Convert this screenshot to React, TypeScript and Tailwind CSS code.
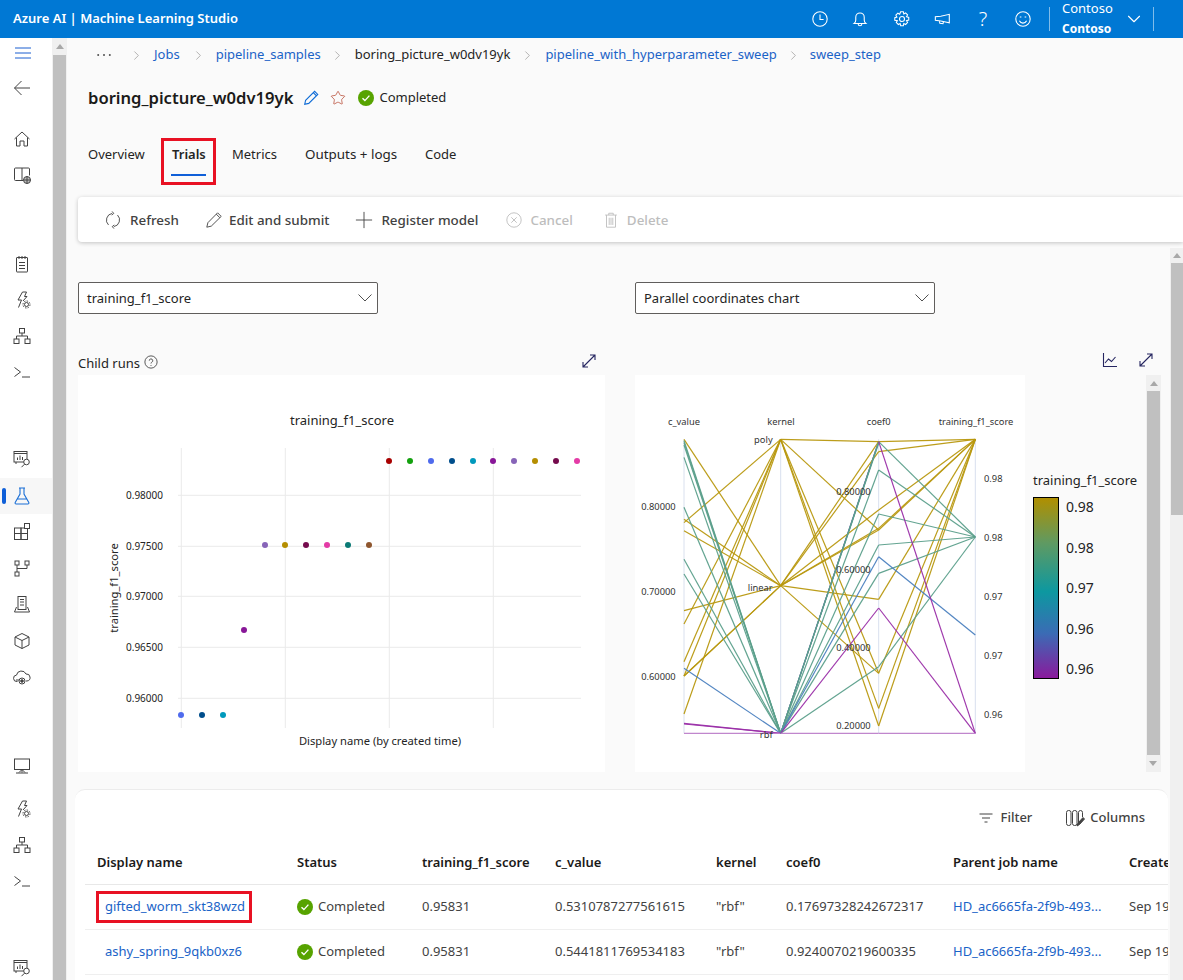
import React from "react";
import { ChevronRight, ChevronDown, Star } from "lucide-react";

type SvgP = { className?: string; children?: React.ReactNode };
const I = ({ className = "w-5 h-5 text-[#424242]", children }: SvgP) => (
  <svg viewBox="0 0 20 20" fill="none" stroke="currentColor" strokeWidth={1} className={className}>{children}</svg>
);

const side = {
  menu: <><path d="M1 5h16M1 10h16M1 15h16" /></>,
  back: <><path d="M18 10H2.500M9.500 3l-7 7 7 7" /></>,
  home: <><path d="M2.500 10 10 3l7.500 7" /><path d="M4.500 8.500V17H8v-5h4v5h3.500V8.500" /></>,
  book: <><path d="M11 15.500H3.500a1 1 0 0 1-1-1V4a1 1 0 0 1 1-1h13a1 1 0 0 1 1 1v6.500" /><path d="M10 3v12.500" /><circle cx="15" cy="15" r="3.500" fill="currentColor" fillOpacity={0.35} /><path d="M11.500 15h7M15 11.500v7" /></>,
  note: <><rect x="4.500" y="3.500" width="11" height="14.500" rx="0.5" /><path d="M7 2v3M10 2v3M13 2v3M7 8.500h6M7 11.500h6M7 14.500h6" /></>,
  auto: <><path d="M10.500 2 6 10h3.500l-3 7.500" /><path d="M10.500 2h4l-2 4.500h2.500L11 11" /><circle cx="14.500" cy="14.500" r="2" /><circle cx="14.500" cy="14.500" r="3.500" strokeDasharray="1.500 1.200" /></>,
  net: <><rect x="7.500" y="2.500" width="5" height="4.500" /><rect x="2" y="13" width="5" height="4.500" /><rect x="13" y="13" width="5" height="4.500" /><path d="M10 7v3M4.500 13v-3h11v3" /></>,
  term: <><path d="m2.500 5.500 6 4.500-6 4.500M10 15h8" /></>,
  data: <><path d="M4 15V5h11" /><rect x="2" y="2.500" width="13" height="10.500" fill="#fff" /><path d="M2 4.500h13M5.500 11V8.500M8 11V6.500M10.500 11V8" /><circle cx="14.500" cy="13" r="2.800" fill="#fff" /><path d="m12.500 15.200-3 3" /></>,
  comp: <><rect x="2.500" y="6" width="6.500" height="5.500" /><rect x="9" y="6" width="6.500" height="5.500" /><rect x="2.500" y="11.500" width="6.500" height="6" /><rect x="9" y="11.500" width="6.500" height="6" /><rect x="12.500" y="1.500" width="5" height="5" fill="#fff" /></>,
  pipe: <><rect x="3" y="3" width="4" height="4" /><rect x="13" y="3" width="4" height="4" /><rect x="3" y="14" width="4" height="4" /><path d="M5 7v7M5 10.500h10V7" /></>,
  env: <><rect x="6" y="2.500" width="8" height="13" /><path d="M8 5.500h4M8 8h4M8 11h4M2.500 18l2-5M17.500 18l-2-5M2.500 18h15" /></>,
  box: <><path d="m10 2.500 7 3.500v8l-7 3.500L3 14V6z" /><path d="m3 6 7 3.500L17 6M10 9.500v8" /></>,
  cloud: <><path d="M5.500 14.500H5a3.200 3.200 0 0 1-.5-6.400A5 5 0 0 1 14 7a3.500 3.500 0 0 1 1 7h-1" /><circle cx="10" cy="14" r="3" /><circle cx="10" cy="14" r="1.300" fill="currentColor" /><path d="M4 13h3" /></>,
  mon: <><rect x="2.500" y="3" width="15" height="10.500" /><path d="M10 13.500v3M4 17h12M7 16.500l3-3 3 3" /></>,
};

const Side = ({ k }: { k: keyof typeof side }) => (
  <div className="h-[36px] flex items-center justify-center text-[#424242]">
    <I className="w-[20px] h-[20px] ml-[-8px]">{side[k]}</I>
  </div>
);

const Flask = () => (
  <svg viewBox="0 0 20 20" fill="none" stroke="currentColor" strokeWidth={1.100} className="w-[20px] h-[20px] ml-[-8px]">
    <path d="M7 2h6M8 2v6L3.200 16.500a1 1 0 0 0 .9 1.500h11.800a1 1 0 0 0 .9-1.500L12 8V2M5.500 13h9" />
  </svg>
);

const Sidebar = () => (
  <div className="w-[52px] bg-white shrink-0 flex flex-col">
    <div className="h-[30px] flex items-center justify-center text-[#1a5fd0]"><I className="w-[20px] h-[20px] ml-[-4px]">{side.menu}</I></div>
    <div className="mt-[2px]"><Side k="back" /></div>
    <div className="mt-[15px]"><Side k="home" /></div>
    <Side k="book" />
    <div className="mt-[53px]"><Side k="note" /></div>
    <Side k="auto" />
    <Side k="net" />
    <Side k="term" />
    <div className="mt-[51px]"><Side k="data" /></div>
    <div className="mt-px relative h-[36px] flex items-center justify-center bg-[#f7f7f7] text-[#1a6fd6]">
      <span className="absolute left-[2px] top-[10px] w-[4px] h-[16px] rounded bg-[#0f5fd8]" />
      <Flask />
    </div>
    <Side k="comp" />
    <Side k="pipe" />
    <Side k="env" />
    <div className="mt-px"><Side k="box" /></div>
    <Side k="cloud" />
    <div className="mt-[53px]"><Side k="mon" /></div>
    <div className="mt-[7px]"><Side k="auto" /></div>
    <Side k="net" />
    <Side k="term" />
    <div className="mt-[51px] h-[30px]"><Side k="data" /></div>
  </div>
);

const ArrowUp = () => (
  <svg viewBox="0 0 10 6" className="w-[8px] h-[5px] text-[#a8a8a8]" fill="currentColor"><path d="M5 0l5 6H0z" /></svg>
);

const LeftScroll = () => (
  <div className="w-[15px] shrink-0 bg-[#f0f0f0] flex flex-col pl-px pr-px">
    <div className="h-[17px] flex items-center justify-center"><ArrowUp /></div>
    <div className="flex-1 bg-[#c0c0c0]" />
  </div>
);

const Header = () => (
  <div className="h-[38px] shrink-0 bg-[#0078d4] text-white flex items-center pl-[13px]">
    <div className="font-semibold text-[13px]">Azure AI | Machine Learning Studio</div>
    <div className="ml-auto flex items-center">
      <svg viewBox="0 0 20 20" fill="none" stroke="currentColor" className="w-[18px] h-[18px]"><circle cx="10" cy="10" r="8" strokeWidth={1.200} /><path d="M10 5v5.500h4" strokeWidth={1.200} /></svg>
      <svg viewBox="0 0 20 20" fill="none" stroke="currentColor" strokeWidth={1.200} className="w-[18px] h-[18px] ml-[22px]"><path d="M3.500 15h13c-1.300-1-1.800-2.500-1.800-4V8A4.700 4.700 0 0 0 5.300 8v3c0 1.500-.5 3-1.800 4ZM8 15.500a2 2 0 0 0 4 0" /></svg>
      <svg viewBox="0 0 20 20" fill="none" stroke="currentColor" strokeWidth={1.200} className="w-[18px] h-[18px] ml-[24px]"><circle cx="10" cy="10" r="2.800" /><path d="m8.500 2 3 0 .5 2.300 2-1 2.200 2.200-1.200 2 2.500.7v3l-2.500.6 1.200 2.100-2.200 2.200-2-1.100-.5 2.500h-3l-.6-2.500-2 1.100-2.200-2.200 1.100-2.100L2 11.500v-3l2.300-.6-1.100-2.100 2.200-2.200 2 1.100z" /></svg>
      <svg viewBox="0 0 20 20" fill="none" stroke="currentColor" strokeWidth={1.200} className="w-[18px] h-[18px] ml-[23px]"><path d="M1.500 7.500v4l6 .8 9.500 2V4.800L7.500 7zM6 12.300l.5 2.500 3.500.5.500-2" /></svg>
      <div className="w-[18px] ml-[22px] text-center text-[20px] leading-[20px] font-light">?</div>
      <svg viewBox="0 0 20 20" fill="none" stroke="currentColor" strokeWidth={1.200} className="w-[18px] h-[18px] ml-[22px]"><circle cx="10" cy="10" r="8" /><path d="M6 12c1 2 2.500 2.600 4 2.600s3-.6 4-2.600" /><path d="M7.300 7.300v1M12.700 7.300v1" strokeWidth={1.800} /></svg>
      <div className="w-px h-[24px] bg-white/50 ml-[17px]" />
      <div className="ml-[12px] w-[63px] h-[38px] flex flex-col overflow-hidden">
        <div className="text-[13px] leading-[18px] mt-[-1px]">Contoso</div>
        <div className="text-[12px] leading-[16px] font-bold mt-[4px]">Contoso</div>
      </div>
      <ChevronDown strokeWidth={1.200} className="w-[22px] h-[22px] ml-[-2px]" />
      <div className="w-px h-[24px] bg-white/50 ml-[8px] mr-[29px]" />
    </div>
  </div>
);

const Sep = () => <ChevronRight strokeWidth={1} className="w-[15px] h-[15px] text-[#8a8886]" />;
const LINK = "text-[#1a63c7]";

const Crumbs = () => (
  <div className="h-[34px] flex items-center text-[13px] pl-[30px] whitespace-nowrap">
    <svg viewBox="0 0 14 4" className="w-[14px] h-[4px]" fill="#505050"><circle cx="1.200" cy="2" r="1" /><circle cx="7" cy="2" r="1" /><circle cx="12.800" cy="2" r="1" /></svg>
    <span className="ml-[18px]"><Sep /></span>
    <span className={`ml-[10px] ${LINK}`}>Jobs</span>
    <span className="ml-[11px]"><Sep /></span>
    <span className={`ml-[10px] ${LINK}`}>pipeline_samples</span>
    <span className="ml-[9px]"><Sep /></span>
    <span className="ml-[10px] text-[#242424]">boring_picture_w0dv19yk</span>
    <span className="ml-[10px]"><Sep /></span>
    <span className={`ml-[10px] ${LINK}`}>pipeline_with_hyperparameter_sweep</span>
    <span className="ml-[9px]"><Sep /></span>
    <span className={`ml-[9px] ${LINK}`}>sweep_step</span>
  </div>
);

const Check = () => (
  <svg viewBox="0 0 16 16" className="w-[16px] h-[16px] shrink-0"><circle cx="8" cy="8" r="8" fill="#57a300" /><path d="m4.500 8.200 2.400 2.400 4.500-5" fill="none" stroke="#fff" strokeWidth={1.400} /></svg>
);

const Title = () => (
  <div className="h-[52px] flex items-center pl-[21px]">
    <div className="text-[16.6px] font-semibold text-[#1b1a19] whitespace-nowrap">boring_picture_w0dv19yk</div>
    <svg viewBox="0 0 20 20" fill="none" stroke="#0f6cd6" strokeWidth={1.200} className="w-[18px] h-[18px] ml-[9px]"><path d="m3 17 1-4.500L14 2.500l3.500 3.500-10 10zM12.500 4l3.500 3.500" /></svg>
    <Star strokeWidth={1.100} className="w-[16px] h-[16px] ml-[10px] text-[#b5452f]" />
    <div className="ml-[12px]"><Check /></div>
    <div className="ml-[5px] text-[13px] text-[#242424]">Completed</div>
  </div>
);

const Tabs = () => (
  <div className="h-[73px] flex pl-[21px] text-[13px] leading-[20px] text-[#242424] whitespace-nowrap">
    <div className="w-[84px] pt-[20px]">Overview</div>
    <div className="relative w-[60px] pt-[20px] font-semibold">
      Trials
      <span className="absolute left-[-1px] top-[50px] w-[35px] h-[2px] bg-[#0f5fd8]" />
      <span className="absolute left-[-11px] top-[14px] w-[55px] h-[47px] border-[3px] border-[#e81123]" />
    </div>
    <div className="w-[73px] pt-[20px]">Metrics</div>
    <div className="w-[120px] pt-[20px] text-[13.4px]">Outputs + logs</div>
    <div className="pt-[20px]">Code</div>
  </div>
);

const Toolbar = () => (
  <div className="ml-[11px] h-[45px] bg-white rounded-l-[4px] shadow-[0_1px_4px_rgba(0,0,0,0.22)] flex items-center text-[13.4px] font-medium text-[#424242] whitespace-nowrap pl-[26px]">
    <svg viewBox="0 0 20 20" fill="none" stroke="currentColor" className="w-[18px] h-[18px]"><path d="M5 15.500A7.500 7.500 0 0 1 9 2.700M15 4.500a7.500 7.500 0 0 1-4 12.800M9 .5l1.800 2.200L8.600 4.500M11 19.500l-1.800-2.200 2.200-1.800" /></svg>
    <span className="ml-[8px] pt-[2px]">Refresh</span>
    <svg viewBox="0 0 20 20" fill="none" stroke="currentColor" className="w-[18px] h-[18px] ml-[26px]"><path d="m2 18 1.200-5L14 2l4 4L7 16.800zM12.500 3.500l4 4" /></svg>
    <span className="ml-[6px] pt-[2px]">Edit and submit</span>
    <svg viewBox="0 0 20 20" fill="none" stroke="currentColor" className="w-[18px] h-[18px] ml-[26px]"><path d="M1 10h18M10 1v18" /></svg>
    <span className="ml-[8px] pt-[2px]">Register model</span>
    <svg viewBox="0 0 20 20" fill="none" stroke="#bdbdbd" className="w-[18px] h-[18px] ml-[27px]"><circle cx="10" cy="10" r="8" /><path d="m7 7 6 6M13 7l-6 6" /></svg>
    <span className="ml-[7px] pt-[2px] text-[#bdbdbd]">Cancel</span>
    <svg viewBox="0 0 20 20" fill="none" stroke="#bdbdbd" className="w-[18px] h-[18px] ml-[29px]"><path d="M3.500 4.500h13M7.500 4.500V2.500h5v2M5 4.500V18h10V4.500M8 7.500v8M10 7.500v8M12 7.500v8" /></svg>
    <span className="ml-[7px] pt-[2px] text-[#bdbdbd]">Delete</span>
  </div>
);

const Select = ({ label }: { label: string }) => (
  <div className="w-[300px] h-[32px] border border-[#605e5c] rounded-[2px] bg-white flex items-center pl-[8px] pr-[5px] text-[13px] text-[#242424]">
    <span className="flex-1 pt-[2px]">{label}</span>
    <svg viewBox="0 0 14 8" fill="none" stroke="#505050" className="w-[14px] h-[8px]"><path d="M.5.500 7 7 13.500.5" /></svg>
  </div>
);

const Expand = () => (
  <svg viewBox="0 0 16 16" fill="none" stroke="#252560" strokeWidth={1.100} className="w-[16px] h-[16px]"><path d="M2 14 14 2M9 2h5v5M2 9v5h5" /></svg>
);

const dots: [number, number, string][] = [
  [243, 945, "#4f6bed"], [306, 945, "#004e8c"], [369, 945, "#0099bc"], [432, 690, "#881798"],
  [495, 435, "#8764b8"], [555, 435, "#b58e00"], [618, 435, "#750b4d"], [681, 435, "#e43ba6"],
  [744, 435, "#0b7a75"], [807, 435, "#8e562e"], [867, 183, "#a80000"], [930, 183, "#13a10e"],
  [993, 183, "#4f6bed"], [1056, 183, "#004e8c"], [1119, 183, "#0099bc"], [1179, 183, "#881798"],
  [1242, 183, "#8764b8"], [1305, 183, "#b58e00"], [1368, 183, "#750b4d"], [1431, 183, "#e43ba6"],
];

const Scatter = () => (
  <svg viewBox="78 375 527 397" className="w-[527px] h-[397px] bg-white block shrink-0">
    {[495.3, 546.3, 596.3, 647.3, 698.3].map((y) => <path key={y} d={`M178 ${y}H581`} stroke="#eaeaea" />)}
    {[181.3, 285.3, 389.3, 493.3].map((x) => <path key={x} d={`M${x} 448V728`} stroke="#eaeaea" />)}
    {["0.98000", "0.97500", "0.97000", "0.96500", "0.96000"].map((t, i) => (
      <text key={t} x="163" y={[498.5, 549.500, 599.500, 650.500, 701.500][i]} textAnchor="end" fontSize="10" fill="#242424">{t}</text>
    ))}
    {dots.map(([x, y, c], i) => <circle key={i} cx={100 + x / 3} cy={400 + y / 3} r="3" fill={c} />)}
    <text x="342" y="425" textAnchor="middle" fontSize="13" fill="#242424">training_f1_score</text>
    <text x="380" y="745" textAnchor="middle" fontSize="11.200" fill="#242424">Display name (by created time)</text>
    <text transform="translate(118 588) rotate(-90)" textAnchor="middle" fontSize="11.200" fill="#242424">training_f1_score</text>
  </svg>
);

const Y = "#b8980f", T = "#5b9f8b", B = "#4a80bf", P = "#9a2ea8", LP = "#bd7fca";
const ax = [147, 437, 731, 1021];
type Seg = [number, number, number, string];
const seg: Seg[] = [
  [1, 1000, 125, P], [1, 1000, 126, B],
  // c_value -> kernel
  ...([[118, 557], [368, 118], [358, 557], [392, 557], [632, 557], [672, 118], [785, 118], [828, 557], [828, 557], [828, 118], [942, 118]] as [number, number][]).map(([a, b]) => [0, a, b, Y] as Seg),
  ...[122, 128, 135, 172, 322, 478, 522].map((a) => [0, a, 1000, T] as Seg),
  [0, 805, 1000, B], [0, 970, 1000, P], [0, 972, 1000, P], [0, 1000, 1000, LP],
  // kernel -> coef0
  ...([[118, 125], [118, 390], [118, 925], [118, 978], [118, 820], [557, 125], [557, 155], [557, 330], [557, 390], [557, 385], [557, 598], [557, 820]] as [number, number][]).map(([a, b]) => [1, a, b, Y] as Seg),
  ...[125, 130, 210, 342, 435, 520, 800].map((b) => [1, 1000, b, T] as Seg),
  [1, 1000, 470, B], [1, 1000, 624, P], [1, 1000, 1000, LP],
  // coef0 -> score
  ...[125, 155, 330, 390, 385, 598, 820, 925, 978].map((a) => [2, a, 118, Y] as Seg),
  ...[125, 210, 342, 435, 520, 800].map((a) => [2, a, 411, T] as Seg),
  [2, 470, 705, B], [2, 125, 1000, P], [2, 624, 1000, P], [2, 1000, 1000, LP],
];

const Parallel = () => (
  <svg viewBox="0 0 1170 1191" className="w-[390px] h-[397px] bg-white block shrink-0">
    <g transform="translate(0 75)">
      {ax.map((x) => <path key={x} d={`M${x} 118V1000`} stroke="#c5d0e6" strokeWidth="2" />)}
      {seg.map(([i, a, b, c], k) => (
        <path key={k} d={`M${ax[i]} ${a}L${ax[i + 1]} ${b}`} stroke={c} strokeWidth="3.600" fill="none" opacity={0.95} />
      ))}
      <g fontSize="28" fill="#333">
        <text x="147" y="75" textAnchor="middle">c_value</text>
        <text x="438" y="75" textAnchor="middle">kernel</text>
        <text x="731" y="75" textAnchor="middle">coef0</text>
        <text x="1023" y="75" textAnchor="middle">training_f1_score</text>
        {[["0.80000", 331], ["0.70000", 586], ["0.60000", 841]].map(([t, y]) => <text key={t} x="122" y={y} textAnchor="end">{t}</text>)}
        <text x="413" y="130" textAnchor="end">poly</text>
        <text x="413" y="573" textAnchor="end">linear</text>
        <text x="413" y="1014" textAnchor="end">rbf</text>
        {[["0.80000", 284], ["0.60000", 518], ["0.40000", 752], ["0.20000", 986]].map(([t, y]) => <text key={t} x="707" y={y} textAnchor="end">{t}</text>)}
        {[["0.98", 245], ["0.98", 422], ["0.97", 599], ["0.97", 776], ["0.96", 953]].map(([t, y], i) => <text key={i} x="1047" y={y}>{t}</text>)}
      </g>
    </g>
  </svg>
);

const Legend = () => (
  <div className="w-[121px] shrink-0 pl-[8px] pt-[95px] text-[13px] text-[#242424]">
    <div className="leading-[20px]">training_f1_score</div>
    <div className="mt-[7px] flex">
      <div className="w-[26px] h-[182px] border border-black bg-[linear-gradient(to_bottom,#b08f00,#5f9a62_25%,#0d98a0_52%,#3a6cb5_75%,#8a1a9c)]" />
      <div className="ml-[7px] h-[182px] flex flex-col justify-between text-[14px] leading-[20px]">
        <span>0.98</span><span>0.98</span><span>0.97</span><span>0.96</span><span>0.96</span>
      </div>
    </div>
  </div>
);

const InnerScroll = () => (
  <div className="w-[15px] h-[397px] shrink-0 bg-[#f0f0f0] flex flex-col">
    <div className="h-[16px] flex items-center justify-center"><ArrowUp /></div>
    <div className="h-[364px] bg-[#c0c0c0] mx-[1px]" />
    <div className="h-[17px] flex items-center justify-center rotate-180"><ArrowUp /></div>
  </div>
);

const cols = ["w-[200px]", "w-[125px]", "w-[133px]", "w-[161px]", "w-[70px]", "w-[167px]", "w-[176px]", "w-[60px]"];

const rows = [
  ["gifted_worm_skt38wzd", "0.95831", "0.5310787277561615", "\"rbf\"", "0.17697328242672317"],
  ["ashy_spring_9qkb0xz6", "0.95831", "0.5441811769534183", "\"rbf\"", "0.9240070219600335"],
];

const Table = () => (
  <div className="ml-[8px] mt-[17px] w-[1093px] h-[191px] bg-white rounded-t-[10px] border-t border-[#ececec] overflow-hidden text-[13px] whitespace-nowrap">
    <div className="h-[50px] flex items-center justify-end pr-[23px] pt-[6px] text-[#424242]">
      <svg viewBox="0 0 16 16" fill="none" stroke="currentColor" className="w-[16px] h-[16px]"><path d="M1.500 4h13M4 8h8M6.500 12h3" /></svg>
      <span className="ml-[7px] font-medium">Filter</span>
      <svg viewBox="0 0 20 20" fill="none" stroke="currentColor" className="w-[20px] h-[20px] ml-[33px]"><rect x="1.500" y="2.500" width="4.500" height="15" rx="2" /><rect x="7.500" y="2.500" width="4.500" height="15" rx="2" /><path d="M13.500 15V4.500a2 2 0 0 1 4 0V9" /><path d="m12 18 1-3 5-5.500 1.500 1.500-5 5.500z" fill="currentColor" /></svg>
      <span className="ml-[5px] font-medium">Columns</span>
    </div>
    <div className="ml-[10px] h-[45px] border-b border-[#e8e8e8] flex items-center pl-[12px] pt-[2px] font-semibold text-[#1b1a19]">
      {["Display name", "Status", "training_f1_score", "c_value", "kernel", "coef0", "Parent job name", "Created"].map((h, i) => (
        <div key={h} className={`${cols[i]} shrink-0`}>{h}</div>
      ))}
    </div>
    {rows.map((r, i) => (
      <div key={r[0]} className="ml-[10px] h-[45px] border-b border-[#efefef] flex items-center pl-[12px] text-[#424242]">
        <div className={`${cols[0]} shrink-0 pl-[8px] relative`}>
          <span className={LINK}>{r[0]}</span>
          {i === 0 && <span className="absolute left-[-1px] top-1/2 -translate-y-1/2 w-[156px] h-[32px] border-[3px] border-[#e81123]" />}
        </div>
        <div className={`${cols[1]} shrink-0 flex items-center gap-[5px]`}><Check />Completed</div>
        <div className={`${cols[2]} shrink-0`}>{r[1]}</div>
        <div className={`${cols[3]} shrink-0`}>{r[2]}</div>
        <div className={`${cols[4]} shrink-0`}>{r[3]}</div>
        <div className={`${cols[5]} shrink-0`}>{r[4]}</div>
        <div className={`${cols[6]} shrink-0 ${LINK}`}>HD_ac6665fa-2f9b-493...</div>
        <div className={`${cols[7]} shrink-0`}>Sep 19</div>
      </div>
    ))}
  </div>
);

export default function App() {
  return (
    <div className="w-[1183px] h-[980px] overflow-hidden flex flex-col font-['Noto_Sans','Open_Sans',sans-serif] bg-[#fafafa]">
      <Header />
      <div className="flex-1 flex min-h-0">
        <Sidebar />
        <LeftScroll />
        <div className="flex-1 min-w-0 flex flex-col">
          <Crumbs />
          <Title />
          <Tabs />
          <Toolbar />
          <div className="flex-1 flex min-h-0">
            <div className="flex-1 min-w-0 flex flex-col overflow-hidden">
              <div className="mt-[40px] ml-[11px] flex gap-[257px]">
                <Select label="training_f1_score" />
                <Select label="Parallel coordinates chart" />
              </div>
              <div className="ml-[11px] h-[61px] flex items-end text-[#242424] text-[13px]">
                <div className="w-[527px] flex items-center pb-[1px]">
                  <span>Child runs</span>
                  <svg viewBox="0 0 16 16" fill="none" stroke="#444" className="w-[14px] h-[14px] ml-[4px] mt-[-4px]"><circle cx="8" cy="8" r="7" /><path d="M6 6.500a2 2 0 1 1 2.800 1.800c-.6.300-.8.700-.8 1.400M8 11.500v1" /></svg>
                  <span className="ml-auto mr-[8px] mb-[5px]"><Expand /></span>
                </div>
                <div className="ml-[30px] w-[526px] flex justify-end items-center pb-[7px] pr-[7px]">
                  <svg viewBox="0 0 16 16" fill="none" stroke="#252560" strokeWidth={1.100} className="w-[16px] h-[16px]"><path d="M1.500 1v13.500H15M3 11l3.500-4 3 2.500 4-4.500" /></svg>
                  <span className="ml-[20px]"><Expand /></span>
                </div>
              </div>
              <div className="ml-[11px] flex">
                <Scatter />
                <div className="ml-[30px] flex">
                  <Parallel />
                  <Legend />
                  <InnerScroll />
                </div>
              </div>
              <Table />
            </div>
            <div className="w-[13px] shrink-0 mt-[6px] bg-[#f0f0f0] flex flex-col">
              <div className="h-[15px] flex items-center justify-center"><ArrowUp /></div>
              <div className="h-[252px] bg-[#c0c0c0] ml-px" />
            </div>
          </div>
        </div>
      </div>
    </div>
  );
}
